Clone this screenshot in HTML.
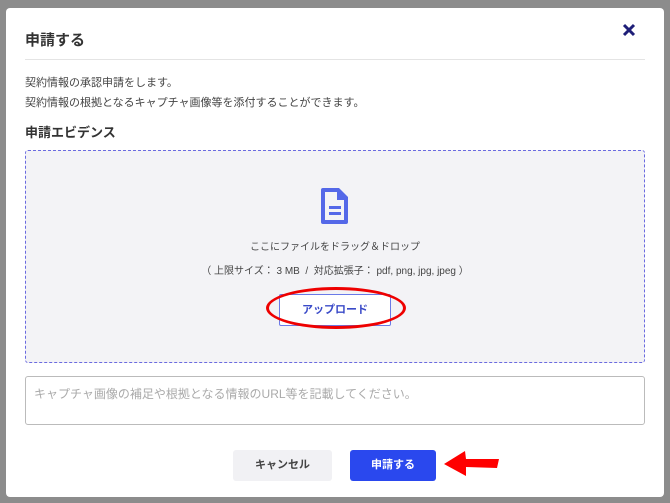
<!DOCTYPE html>
<html><head><meta charset="utf-8"><style>
body{margin:0;width:670px;height:503px;background:#8c8c8c;font-family:"Liberation Sans","Noto Sans CJK JP",sans-serif;position:relative;overflow:hidden}
.m{position:absolute;left:6px;top:8px;width:658px;height:489px;background:#fff;border-radius:4px}
.a{position:absolute}
</style></head><body>
<div class="a" style="left:0;top:0;width:670px;height:8px;background:#8c8c8c"></div>
<div class="m"></div>
<div class="a" style="left:25px;top:29px;font-size:15px;font-weight:bold;color:#333">申請する</div>
<svg class="a" style="left:622px;top:23px" width="14" height="14"><path d="M2 2L12 12M12 2L2 12" stroke="#1e1e78" stroke-width="3"/></svg>
<div class="a" style="left:25px;top:59px;width:620px;height:1px;background:#e4e4e4"></div>
<div class="a" style="left:25px;top:73px;font-size:11px;color:#444;line-height:20px">契約情報の承認申請をします。<br>契約情報の根拠となるキャプチャ画像等を添付することができます。</div>
<div class="a" style="left:25px;top:122px;font-size:13px;font-weight:bold;color:#333">申請エビデンス</div>
<div class="a" style="left:25px;top:150px;width:618px;height:211px;background:#f3f3f6;border:1px dashed #6a6ae0;border-radius:3px"></div>
<svg class="a" style="left:320px;top:187px" width="30" height="38" viewBox="0 0 30 38"><path d="M3 1h16l9 9v25a2 2 0 0 1-2 2H3a2 2 0 0 1-2-2V3a2 2 0 0 1 2-2z" fill="#5468e8"/><path d="M5 5h12v8h7v20H5z" fill="#f3f3f6"/><rect x="9" y="19" width="12" height="3" fill="#5468e8"/><rect x="9" y="25" width="12" height="3" fill="#5468e8"/></svg>
<div class="a" style="left:0;width:670px;top:238px;text-align:center;font-size:10px;color:#444">ここにファイルをドラッグ＆ドロップ</div>
<div class="a" style="left:0;width:670px;top:262px;text-align:center;font-size:10px;color:#444">（ 上限サイズ： 3 MB &nbsp;/ &nbsp;対応拡張子： pdf, png, jpg, jpeg ）</div>
<div class="a" style="left:279px;top:294px;width:110px;height:30px;border:1px solid #6a7ae8;border-radius:2px;background:#fff;text-align:center;line-height:30px;font-size:11px;font-weight:bold;color:#3a4ac8">アップロード</div>
<div class="a" style="left:266px;top:287px;width:134px;height:36px;border:3px solid #e00;border-radius:50%"></div>
<div class="a" style="left:25px;top:376px;width:618px;height:47px;border:1px solid #bbb;border-radius:3px;background:#fff"></div>
<div class="a" style="left:34px;top:385px;font-size:12px;color:#aaa">キャプチャ画像の補足や根拠となる情報のURL等を記載してください。</div>
<div class="a" style="left:233px;top:450px;width:99px;height:31px;background:#f1f1f4;border-radius:3px;text-align:center;line-height:31px;font-size:11px;font-weight:bold;color:#444">キャンセル</div>
<div class="a" style="left:350px;top:450px;width:86px;height:31px;background:#2a48ee;border-radius:3px;text-align:center;line-height:31px;font-size:11px;font-weight:bold;color:#fff">申請する</div>
<svg class="a" style="left:442px;top:448px" width="60" height="30"><path d="M2 16L23 3L24 11L57 11L55 20L24 19L24 28Z" fill="#f00"/></svg>
</body></html>
